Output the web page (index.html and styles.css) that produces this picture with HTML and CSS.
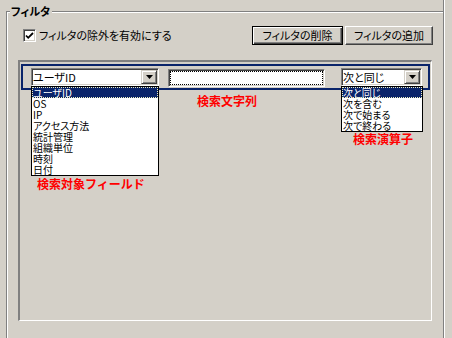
FILE: index.html
```html
<!DOCTYPE html>
<html lang="ja">
<head>
    <meta charset="UTF-8">
    <title>フィルタ</title>
    <link rel="stylesheet" href="styles.css">
</head>
<body>
    <div class="pane">
        <fieldset class="group">
            <legend>フィルタ</legend>

            <div class="toolbar">
                <label class="check">
                    <span class="check-box">
                        <svg width="9" height="9" viewBox="0 0 9 9">
                            <path d="M1 4.5 L3.2 6.8 L8 2" fill="none" stroke="#000" stroke-width="1.8"/>
                        </svg>
                    </span>
                    フィルタの除外を有効にする
                </label>
                <div class="buttons">
                    <button class="btn btn-default btn-delete">フィルタの削除</button>
                    <button class="btn btn-add">フィルタの追加</button>
                </div>
            </div>

            <div class="panel">
                <div class="band">
                    <!-- 検索対象フィールド -->
                    <div class="col col-field">
                        <div class="combo">
                            <span class="combo-text">ユーザID</span>
                            <span class="combo-btn">
                                <svg width="7" height="4" viewBox="0 0 7 4"><path d="M0 0 H7 L3.5 4 Z" fill="#000"/></svg>
                            </span>
                        </div>
                        <ul class="list">
                            <li class="selected">ユーザID</li>
                            <li>OS</li>
                            <li>IP</li>
                            <li>アクセス方法</li>
                            <li>統計管理</li>
                            <li>組織単位</li>
                            <li>時刻</li>
                            <li>日付</li>
                        </ul>
                        <p class="caption">検索対象フィールド</p>
                    </div>

                    <!-- 検索文字列 -->
                    <div class="col col-text">
                        <div class="textbox"><span class="focus"></span></div>
                        <p class="caption">検索文字列</p>
                    </div>

                    <!-- 検索演算子 -->
                    <div class="col col-op">
                        <div class="combo">
                            <span class="combo-text">次と同じ</span>
                            <span class="combo-btn">
                                <svg width="7" height="4" viewBox="0 0 7 4"><path d="M0 0 H7 L3.5 4 Z" fill="#000"/></svg>
                            </span>
                        </div>
                        <ul class="list">
                            <li class="selected">次と同じ</li>
                            <li>次を含む</li>
                            <li>次で始まる</li>
                            <li>次で終わる</li>
                        </ul>
                        <p class="caption">検索演算子</p>
                    </div>
                </div>
            </div>
        </fieldset>
    </div>
</body>
</html>
```

FILE: styles.css
```css
/* 全体 */
body {
    margin: 0;
    background: #d4d0c8;
    font-family: "Noto Sans CJK JP", sans-serif;
    font-size: 11px;
    font-feature-settings: "palt";
    color: #000;
}

.pane {
    width: 443px;
    height: 338px;
    border-right: 1px solid #808080;
    box-shadow: 1px 0 #fff;
    overflow: hidden;
}

/* グループボックス */
.group {
    margin: 4px 0 0 6px;
    padding: 0 0 40px;
    border: 1px solid #808080;
    border-right: 0;
    box-shadow: inset 1px 1px #fff;
    min-inline-size: auto;
}

.group legend {
    margin-left: 3px;
    padding: 0 2px 0 1px;
    font-size: 11px;
    font-weight: bold;
    line-height: 14px;
    background: #d4d0c8;
}

/* 上段 */
.toolbar {
    display: flex;
    align-items: center;
    height: 19px;
    margin: 8px 10px 0 16px;
}

.check {
    display: flex;
    align-items: center;
    gap: 3px;
    line-height: 13px;
}

.check-box {
    display: flex;
    align-items: center;
    justify-content: center;
    width: 13px;
    height: 13px;
    box-sizing: border-box;
    border: 1px solid;
    border-color: #808080 #fff #fff #808080;
    box-shadow: inset 1px 1px #404040, inset -1px -1px #d4d0c8;
    background: #fff;
}

.buttons {
    display: flex;
    gap: 2px;
    margin-left: auto;
}

.btn {
    height: 19px;
    padding: 0;
    font: inherit;
    line-height: 15px;
    color: #000;
    background: #d4d0c8;
    border: 1px solid;
    border-color: #fff #404040 #404040 #fff;
    box-shadow: inset -1px -1px #808080;
}

.btn-default {
    border-color: #000;
    box-shadow: inset 1px 1px #fff, inset -1px -1px #404040, inset -2px -2px #808080;
}

.btn-delete { width: 91px; }
.btn-add { width: 88px; }

/* 下段パネル */
.panel {
    width: 414px;
    height: 261px;
    margin: 15px 0 0 11px;
    box-sizing: border-box;
    border-style: solid;
    border-width: 2px 1px 1px 2px;
    border-color: #808080 #fff #fff #808080;
}

.band {
    display: flex;
    align-items: flex-start;
    width: 409px;
    height: 26px;
    margin: 2px 0 0 1px;
    padding: 2px 0 0 8px;
    box-sizing: border-box;
    border: 2px solid #0a246a;
}

.col-field { width: 128px; margin-right: 9px; }
.col-text { width: 157px; margin-right: 16px; }
.col-op { width: 82px; }

/* コンボボックス */
.combo {
    display: flex;
    height: 18px;
    padding: 1px;
    box-sizing: border-box;
    border: 1px solid;
    border-color: #808080 #fff #fff #808080;
    box-shadow: inset 1px 1px #404040, inset -1px -1px #d4d0c8;
    background: #fff;
}

.col-op .combo { width: 81px; }

.combo-text {
    flex: 1;
    line-height: 14px;
    white-space: nowrap;
}

.combo-btn {
    display: flex;
    align-items: center;
    justify-content: center;
    width: 16px;
    height: 14px;
    box-sizing: border-box;
    border: 1px solid;
    border-color: #d4d0c8 #404040 #404040 #d4d0c8;
    box-shadow: inset 1px 1px #fff, inset -1px -1px #808080;
    background: #d4d0c8;
}

/* ドロップダウン */
.list {
    margin: 0;
    padding: 0;
    list-style: none;
    border: 1px solid #000;
    background: #fff;
}

.list li {
    height: 11px;
    padding-left: 1px;
    font-size: 10px;
    line-height: 11px;
    white-space: nowrap;
}

.list li.selected {
    color: #fff;
    background: #0a246a;
    outline: 1px dotted #f0f0c0;
    outline-offset: -1px;
}

/* テキストボックス */
.textbox {
    height: 18px;
    margin-top: 1px;
    padding: 1px;
    box-sizing: border-box;
    border: 1px solid;
    border-color: #808080 #fff #fff #808080;
    box-shadow: inset 1px 1px #404040, inset -1px -1px #d4d0c8;
    background: #fff;
}

.focus {
    display: block;
    height: 100%;
    box-sizing: border-box;
    border: 1px dotted #000;
}

/* 赤いラベル */
.caption {
    margin: 1px 0 0 6px;
    font-size: 12px;
    font-weight: bold;
    font-feature-settings: normal;
    line-height: 14px;
    color: #f00;
    white-space: nowrap;
}

.col-text .caption { margin: 7px 0 0 29px; }
.col-op .caption { margin: 0 0 0 12px; }
```
